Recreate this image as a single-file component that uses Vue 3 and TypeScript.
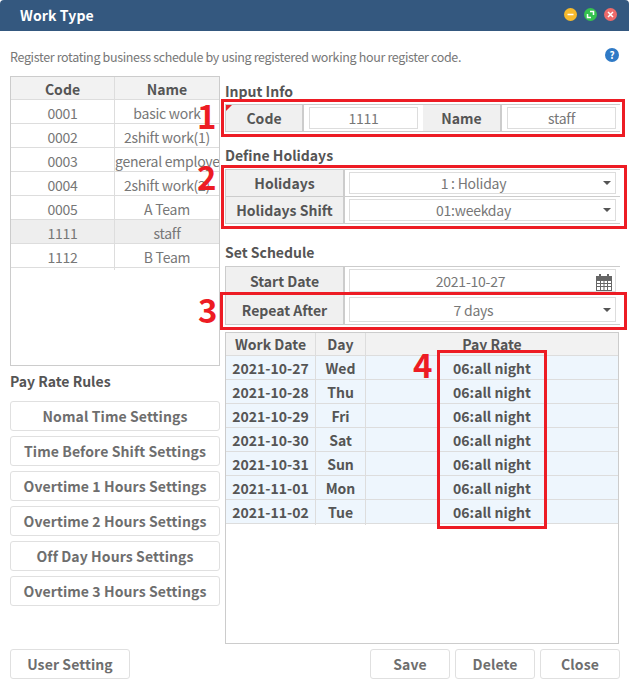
<template>
  <div class="win">
    <header class="titlebar">
      <h1>Work Type</h1>
      <div class="win-btns">
        <span class="dot yellow"><svg viewBox="0 0 13 13"><path d="M3.500 6.500h6" /></svg></span>
        <span class="dot green"><svg viewBox="0 0 13 13"><path d="M6 3.500h3.500V7M3.500 6v3.500H7" /></svg></span>
        <span class="dot red"><svg viewBox="0 0 13 13"><path d="M4 4l5 5M9 4l-5 5" /></svg></span>
      </div>
    </header>

    <div class="desc">
      <span>Register rotating business schedule by using registered working hour register code.</span>
      <span class="help">?</span>
    </div>

    <div class="columns">
      <aside class="left">
        <div class="code-list">
          <div class="code-row head">
            <div>Code</div>
            <div>Name</div>
          </div>
          <div
            v-for="row in codes"
            :key="row.code"
            class="code-row"
            :class="{ selected: row.code === '1111' }"
          >
            <div>{{ row.code }}</div>
            <div class="clip">{{ row.name }}</div>
          </div>
        </div>
        <h2 class="rules-title">Pay Rate Rules</h2>
        <div class="rules">
          <button v-for="rule in rules" :key="rule" class="btn wide">{{ rule }}</button>
        </div>
        <button class="btn user">User Setting</button>
      </aside>

      <main class="right">
        <h2 class="input-title">Input Info</h2>
        <div class="form-row first">
          <div class="label code-label">Code<i class="required"></i></div>
          <div class="field code-field"><div class="box">1111</div></div>
          <div class="label code-label">Name</div>
          <div class="field name-field"><div class="box">staff</div></div>
        </div>

        <h2 class="holidays-title">Define Holidays</h2>
        <div class="form-row first">
          <div class="label wide-label">Holidays</div>
          <div class="field"><div class="box select">1 : Holiday<i class="caret"></i></div></div>
        </div>
        <div class="form-row">
          <div class="label wide-label">Holidays Shift</div>
          <div class="field"><div class="box select">01:weekday<i class="caret"></i></div></div>
        </div>

        <h2 class="schedule-title">Set Schedule</h2>
        <div class="form-row first start">
          <div class="label wide-label">Start Date</div>
          <div class="field">
            <div class="box date">
              2021-10-27
              <svg class="cal" viewBox="0 0 16 17">
                <path fill="#666" d="M0 2h3V0h2v2h6V0h2v2h3v15H0z" />
                <path fill="#fff" d="M1 6h14v10H1z" />
                <path fill="#666" d="M1 6h14v1H1zM1 9h14v1H1zM1 12h14v1H1zM4 6h1v10H4zM7.500 6h1v10h-1zM11 6h1v10h-1z" />
              </svg>
            </div>
          </div>
        </div>
        <div class="form-row repeat">
          <div class="label wide-label">Repeat After</div>
          <div class="field"><div class="box select">7 days<i class="caret"></i></div></div>
        </div>

        <div class="grid">
          <div class="grid-row grid-head">
            <div>Work Date</div>
            <div>Day</div>
            <div>Pay Rate</div>
          </div>
          <div v-for="day in days" :key="day.date" class="grid-row">
            <div>{{ day.date }}</div>
            <div>{{ day.name }}</div>
            <div>06:all night</div>
          </div>
        </div>
      </main>
    </div>

    <footer class="actions">
      <button class="btn action">Save</button>
      <button class="btn action">Delete</button>
      <button class="btn action">Close</button>
    </footer>

    <div class="mark m1"></div>
    <div class="mark m2"></div>
    <div class="mark m3"></div>
    <div class="mark m4"></div>
    <span class="num n1">1</span>
    <span class="num n2">2</span>
    <span class="num n3">3</span>
    <span class="num n4">4</span>
  </div>
</template>

<script setup lang="ts">
interface CodeRow {
  code: string;
  name: string;
}

interface DayRow {
  date: string;
  name: string;
}

const codes: CodeRow[] = [
  { code: '0001', name: 'basic work' },
  { code: '0002', name: '2shift work(1)' },
  { code: '0003', name: 'general employee' },
  { code: '0004', name: '2shift work(2)' },
  { code: '0005', name: 'A Team' },
  { code: '1111', name: 'staff' },
  { code: '1112', name: 'B Team' },
];

const rules: string[] = [
  'Nomal Time Settings',
  'Time Before Shift Settings',
  'Overtime 1 Hours Settings',
  'Overtime 2 Hours Settings',
  'Off Day Hours Settings',
  'Overtime 3 Hours Settings',
];

const days: DayRow[] = [
  { date: '2021-10-27', name: 'Wed' },
  { date: '2021-10-28', name: 'Thu' },
  { date: '2021-10-29', name: 'Fri' },
  { date: '2021-10-30', name: 'Sat' },
  { date: '2021-10-31', name: 'Sun' },
  { date: '2021-11-01', name: 'Mon' },
  { date: '2021-11-02', name: 'Tue' },
];
</script>

<style>
html, body {
  margin: 0;
  background: #fff;
}
</style>

<style scoped>
.win {
  position: relative;
  width: 629px;
  height: 688px;
  overflow: hidden;
  background: #fff;
  color: #777;
  font-family: "Noto Sans CJK KR", "Noto Sans", sans-serif;
  font-size: 14px;
  letter-spacing: -0.25px;
}

.titlebar {
  height: 31px;
  box-sizing: border-box;
  display: flex;
  align-items: center;
  justify-content: space-between;
  padding: 0 12px 2px 20px;
  background: #34587f;
  border-radius: 4px 4px 0 0;
}

.titlebar h1 {
  margin: 0;
  color: #fff;
  font-size: 14px;
  font-weight: 700;
  letter-spacing: 0.1px;
}

.win-btns {
  display: flex;
  gap: 7px;
}

.dot {
  width: 13px;
  height: 13px;
  border-radius: 50%;
  display: block;
}

.dot svg {
  display: block;
  width: 13px;
  height: 13px;
  fill: none;
  stroke: #fff;
  stroke-width: 1.500;
}

.yellow { background: #f5b92c; }
.green { background: #35c24f; }
.red { background: #ee6a6a; }

.desc {
  height: 45px;
  padding: 5px 10px 0;
  display: flex;
  align-items: center;
  justify-content: space-between;
  font-size: 12.500px;
  letter-spacing: -0.34px;
  box-sizing: border-box;
}

.help {
  width: 14px;
  height: 14px;
  margin-top: -3px;
  border-radius: 50%;
  background: #2f7ac6;
  color: #fff;
  font-size: 10px;
  font-weight: 700;
  line-height: 14px;
  letter-spacing: 0;
  text-align: center;
}

.columns {
  display: flex;
  padding-left: 10px;
  gap: 5px;
}

.left {
  width: 210px;
  flex: none;
}

.code-list {
  height: 290px;
  box-sizing: border-box;
  border: 1px solid #ccc;
}

.code-row {
  display: grid;
  grid-template-columns: 103px 1fr;
  height: 24px;
  line-height: 26px;
  text-align: center;
  border-bottom: 1px solid #ddd;
  box-sizing: border-box;
}

.code-row > div + div {
  border-left: 1px solid #ddd;
}

.code-row .clip {
  overflow: hidden;
  white-space: nowrap;
}

.code-row.head {
  height: 23px;
  line-height: 25px;
  background: #f2f2f2;
  font-weight: 700;
  color: #555;
  letter-spacing: 0;
}

.code-row.selected {
  background: #eee;
}

h2 {
  margin: 0;
  color: #555;
  font-size: 14px;
  font-weight: 700;
  line-height: 20px;
  letter-spacing: 0;
}

.rules-title {
  margin-top: 5px;
}

.rules {
  margin-top: 10px;
  display: flex;
  flex-direction: column;
  gap: 5px;
}

.btn {
  height: 30px;
  padding: 0;
  background: #fff;
  border: 1px solid #e0e0e0;
  border-radius: 3px;
  color: #6e6e6e;
  font-family: inherit;
  font-size: 14px;
  font-weight: 700;
  letter-spacing: 0.1px;
}

.btn.wide {
  width: 210px;
}

.btn.user {
  display: block;
  width: 120px;
  margin-top: 43px;
}

.right {
  width: 395px;
  padding-top: 5px;
}

.input-title {
  margin-bottom: 3px;
}

.form-row {
  display: flex;
  width: 395px;
  height: 27px;
  box-sizing: border-box;
  border-bottom: 1px solid #ccc;
}

.form-row.first {
  height: 28px;
  border-top: 1px solid #ccc;
}

.form-row.start {
  height: 29px;
}

.form-row.repeat {
  height: 30px;
}

.label {
  position: relative;
  flex: none;
  display: flex;
  align-items: center;
  justify-content: center;
  box-sizing: border-box;
  background: #f0f0f0;
  border-right: 2px solid #ccc;
  color: #555;
  font-weight: 700;
  letter-spacing: 0;
}

.label:first-child {
  border-left: 1px solid #ccc;
}

.code-label {
  width: 79px;
}

.wide-label {
  width: 120px;
}

.required {
  position: absolute;
  left: 0;
  top: 0;
  border-top: 6px solid #e8202a;
  border-right: 6px solid transparent;
}

.field {
  flex: 1;
  min-width: 0;
  padding: 2px 4px;
  display: flex;
}

.code-field {
  flex: none;
  width: 119px;
  box-sizing: border-box;
  padding: 2px 5px;
}

.name-field {
  padding: 2px 4px 2px 5px;
}

.box {
  position: relative;
  flex: 1;
  box-sizing: border-box;
  border: 1px solid #ddd;
  display: flex;
  align-items: center;
  justify-content: center;
}

.box.select {
  padding-right: 18px;
}

.box.date {
  padding-right: 24px;
}

.caret {
  position: absolute;
  right: 4px;
  top: 50%;
  margin-top: -2px;
  border-top: 4px solid #555;
  border-left: 4px solid transparent;
  border-right: 4px solid transparent;
}

.cal {
  position: absolute;
  right: 3px;
  top: 4px;
  width: 16px;
  height: 17px;
}

.holidays-title {
  margin-top: 13px;
  margin-bottom: 4px;
}

.schedule-title {
  margin-top: 18px;
  margin-bottom: 4px;
}

.grid {
  margin-top: 7px;
  width: 394px;
  height: 312px;
  box-sizing: border-box;
  border: 1px solid #ccc;
}

.grid-row {
  display: grid;
  grid-template-columns: 89px 50px 1fr;
  height: 24px;
  line-height: 25px;
  box-sizing: border-box;
  text-align: center;
  background: #eef6fd;
  border-bottom: 1px solid #ddd;
  color: #555;
  font-weight: 700;
  letter-spacing: 0;
}

.grid-row > div + div {
  border-left: 1px solid #ddd;
}

.grid-row.grid-head {
  height: 23px;
  line-height: 23px;
  background: #f2f2f2;
}

.actions {
  position: absolute;
  right: 9px;
  top: 649px;
  display: flex;
  gap: 5px;
}

.btn.action {
  width: 80px;
}

.mark {
  position: absolute;
  box-sizing: border-box;
  border: 3px solid #ed1c24;
  pointer-events: none;
}

.m1 { left: 221px; top: 99px; width: 404px; height: 38px; }
.m2 { left: 221px; top: 165px; width: 406px; height: 64px; }
.m3 { left: 220px; top: 292px; width: 407px; height: 38px; }
.m4 { left: 437px; top: 350px; width: 110px; height: 179px; }

.num {
  position: absolute;
  color: #ed1c24;
  font-size: 33px;
  font-weight: 700;
  line-height: 1;
  letter-spacing: 0;
}

.n1 { left: 197px; top: 99px; }
.n2 { left: 197px; top: 160px; }
.n3 { left: 198px; top: 293px; }
.n4 { left: 413px; top: 348px; }
</style>
